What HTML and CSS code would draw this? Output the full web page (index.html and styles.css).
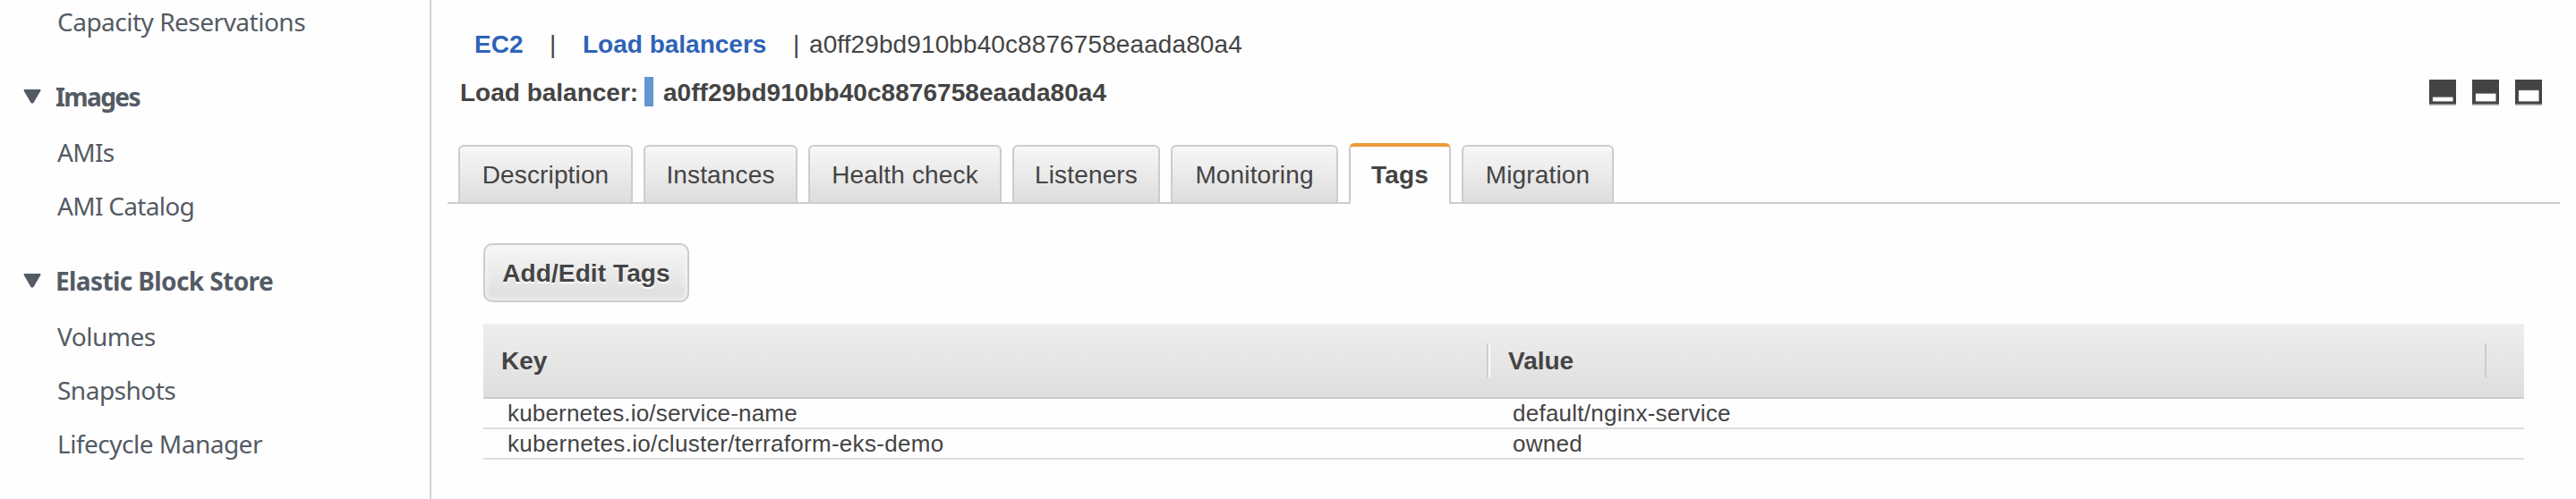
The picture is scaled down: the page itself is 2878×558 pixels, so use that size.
FILE: index.html
```html
<!DOCTYPE html>
<html lang="en">
<head>
<meta charset="utf-8">
<title>Load balancers</title>
<link rel="stylesheet" href="styles.css">
</head>
<body>
<div class="page">
  <nav class="sidebar">
    <section class="group">
      <a class="item item-capacity">Capacity Reservations</a>
    </section>
    <section class="group">
      <h2 class="heading"><svg class="caret" viewBox="0 0 20 16"><path d="M1.5 1h17L10.6 14.6h-1.2z"/></svg><span class="head-images">Images</span></h2>
      <a class="item item-amis">AMIs</a>
      <a class="item item-catalog">AMI Catalog</a>
    </section>
    <section class="group">
      <h2 class="heading"><svg class="caret" viewBox="0 0 20 16"><path d="M1.5 1h17L10.6 14.6h-1.2z"/></svg><span class="head-ebs">Elastic Block Store</span></h2>
      <a class="item item-volumes">Volumes</a>
      <a class="item item-snapshots">Snapshots</a>
      <a class="item item-lifecycle">Lifecycle Manager</a>
    </section>
  </nav>
  <main class="main">
    <div class="crumbs">
      <a class="crumb crumb-ec2">EC2</a><span class="bar bar-first">|</span><a class="crumb crumb-lb">Load balancers</a><span class="bar bar-last">|</span><span class="crumb-id">a0ff29bd910bb40c8876758eaada80a4</span>
    </div>
    <div class="title-row">
      <span class="title-label">Load balancer:</span><span class="marker"></span><span class="title-id">a0ff29bd910bb40c8876758eaada80a4</span>
      <div class="views">
        <svg class="view" viewBox="0 0 30 29"><path class="dark" d="M0 0h30v27.7H0z"/><path class="soft" d="M0 27.7h30V29H0z"/><path class="hole" d="M4 19.7h22.5v4.6H4z"/></svg>
        <svg class="view" viewBox="0 0 30 29"><path class="dark" d="M0 0h30v27.7H0z"/><path class="soft" d="M0 27.7h30V29H0z"/><path class="hole" d="M4 15.7h22.5v8.6H4z"/></svg>
        <svg class="view" viewBox="0 0 30 29"><path class="dark" d="M0 0h30v27.7H0z"/><path class="soft" d="M0 27.7h30V29H0z"/><path class="hole" d="M4 12h22.5v12.3H4z"/></svg>
      </div>
    </div>
    <div class="tabs">
      <a class="tab tab-description">Description</a>
      <a class="tab tab-instances">Instances</a>
      <a class="tab tab-health">Health check</a>
      <a class="tab tab-listeners">Listeners</a>
      <a class="tab tab-monitoring">Monitoring</a>
      <a class="tab tab-tags">Tags</a>
      <a class="tab tab-migration">Migration</a>
    </div>
    <div class="panel">
      <button class="button" type="button">Add/Edit Tags</button>
      <div class="table">
        <div class="thead">
          <div class="th th-key"><span>Key</span></div>
          <div class="th th-value"><span>Value</span></div>
        </div>
        <div class="row"><span class="cell">kubernetes.io/service-name</span><span class="cell cell-value">default/nginx-service</span></div>
        <div class="row"><span class="cell cell-cluster">kubernetes.io/cluster/terraform-eks-demo</span><span class="cell cell-value">owned</span></div>
      </div>
    </div>
  </main>
</div>
</body>
</html>
```
FILE: styles.css
```css
* { box-sizing: border-box; }
body {
  margin: 0;
  background: #fefefe;
  color: #444;
  font: 28px/40px "Liberation Sans", Arial, sans-serif;
  white-space: nowrap;
}
.page { display: flex; height: 558px; overflow: hidden; }

.sidebar {
  width: 482px;
  flex: none;
  border-right: 2px solid #ccd2d6;
  color: #545b64;
  font-family: "Noto Sans", sans-serif;
  line-height: 60px;
  display: flex;
  flex-direction: column;
  gap: 24px;
  margin-top: -6px;
}
.group { display: flex; flex-direction: column; }
.item { padding-left: 64px; letter-spacing: -.5px; }
.item-amis, .item-catalog { letter-spacing: -.7px; }
.heading {
  margin: 0 0 2px;
  font-size: 28px;
  font-weight: 700;
  display: flex;
  align-items: center;
  padding-left: 26px;
}
.head-images { letter-spacing: -1.6px; }
.head-ebs { letter-spacing: -.6px; }
.caret {
  width: 20px;
  height: 16px;
  margin-right: 16px;
  fill: #545b64;
  stroke: #545b64;
  stroke-width: 2;
  stroke-linejoin: round;
}

.main { flex: 1; padding: 30px 18px 0 18px; }
.crumbs { display: flex; padding-left: 30px; height: 54px; }
.crumb { color: #2d63b8; font-weight: 700; }
.crumb-ec2 { width: 84px; }
.bar-first { width: 37px; }
.crumb-lb { width: 235px; }
.bar-last { width: 18px; }
.crumb-id { letter-spacing: .1px; }
.title-row { display: flex; padding-left: 14px; height: 76px; font-weight: 700; }
.title-label { width: 206px; }
.marker { width: 10px; height: 33px; margin: 2px 11px 0 0; background: #6495cc; }
.title-id { letter-spacing: .05px; }
.views { display: flex; gap: 18px; margin: 5px 20px 0 auto; }
.view { width: 30px; height: 29px; }
.dark { fill: #444; }
.soft { fill: #bbb; }
.hole { fill: #fff; stroke: #aaa; stroke-width: .5; }

.tabs {
  display: flex;
  align-items: flex-end;
  gap: 12px;
  height: 68px;
  padding-left: 12px;
  box-shadow: inset 0 -2px #ccc;
}
.tab {
  height: 66px;
  border: 2px solid #ccc;
  border-radius: 6px 6px 0 0;
  background: linear-gradient(#f7f7f7, #ddd);
  line-height: 64px;
  letter-spacing: .15px;
  text-align: center;
}
.tab-description { width: 195px; }
.tab-instances { width: 172px; }
.tab-health { width: 216px; }
.tab-listeners { width: 165px; }
.tab-monitoring { width: 187px; }
.tab-tags {
  width: 114px;
  height: 68px;
  border-top: 4px solid #ee9b37;
  border-bottom: 0;
  background: #fefefe;
  font-weight: 700;
}
.tab-migration { width: 170px; }

.panel { padding: 44px 40px 0; }
.button {
  display: block;
  width: 230px;
  height: 66px;
  padding: 0;
  border: 2px solid #ccc;
  border-radius: 10px;
  background: linear-gradient(#f7f7f7, #ddd);
  box-shadow: inset 0 0 5px 2px #f4f4f4;
  color: #444;
  font: 700 28px/64px "Liberation Sans", Arial, sans-serif;
  letter-spacing: .1px;
  text-shadow: 0 2px #fff;
}
.table { margin-top: 24px; }
.thead {
  display: grid;
  grid-template-columns: 1125px 1fr;
  height: 84px;
  padding: 22px 42px 22px 0;
  border-bottom: 2px solid #ccc;
  background: linear-gradient(#eee, #dedede);
  font-weight: 700;
}
.th { height: 38px; padding-left: 20px; }
.th-key { border-right: 2px solid #fff; box-shadow: inset -2px 0 #ccc; }
.th-value { border-right: 2px solid #ccc; }
.row {
  display: grid;
  grid-template-columns: 1123px 1fr;
  height: 34px;
  padding-left: 27px;
  border-bottom: 2px solid #ddd;
  font-size: 26px;
  line-height: 32px;
}
.cell { letter-spacing: .17px; }
.cell-cluster { letter-spacing: .3px; }
.cell-value { letter-spacing: .25px; }
```
